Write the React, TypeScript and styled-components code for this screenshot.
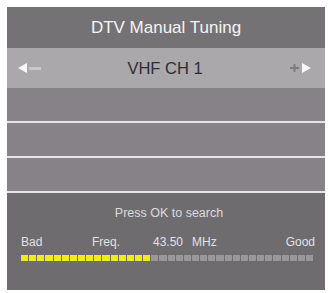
import styled, { createGlobalStyle } from "styled-components";

const Global = createGlobalStyle`
  body {
    margin: 0;
    background: #ffffff;
    font-family: "Liberation Sans", Arial, sans-serif;
  }
`;

const Page = styled.div`
  padding: 7px 3px 3px 7px;
`;

const Panel = styled.div`
  width: 318px;
  height: 283px;
  display: flex;
  flex-direction: column;
  background: #6f6c70;
`;

const TitleBar = styled.div`
  height: 41px;
  display: flex;
  align-items: center;
  justify-content: center;
  background: #757275;
  color: #f4f4f4;
  font-size: 17px;
  padding-top: 1px;
  box-sizing: border-box;
`;

const ChannelRow = styled.div`
  height: 40px;
  display: flex;
  align-items: center;
  justify-content: space-between;
  padding: 0 12px 0 10px;
  background: #aaa8ab;
  color: #2e2d30;
  font-size: 16.5px;
`;

const ArrowGroup = styled.div<{ $right?: boolean }>`
  width: 40px;
  display: flex;
  align-items: center;
  justify-content: ${({ $right }) => ($right ? "flex-end" : "flex-start")};
`;

const EmptyRow = styled.div`
  height: 33px;
  background: #868287;
  border-bottom: 2px solid #e6e4e8;
`;

const SearchPanel = styled.div`
  flex: 1;
  display: flex;
  flex-direction: column;
  padding: 13px 10px 0 14px;
  color: #dcdadd;
`;

const Hint = styled.div`
  text-align: center;
  font-size: 12.5px;
  padding-left: 2px;
`;

const Labels = styled.div`
  margin-top: 15px;
  display: flex;
  align-items: center;
  color: #e2e0e3;
  font-size: 12px;
`;

const Label = styled.span<{ $w?: number; $end?: boolean }>`
  width: ${({ $w }) => ($w ? `${$w}px` : "auto")};
  margin-left: ${({ $end }) => ($end ? "auto" : "0")};
`;

const Meter = styled.div`
  margin: 6px 2px 0 0;
  display: flex;
  gap: 1px;
`;

const Segment = styled.div<{ $on: boolean }>`
  flex: 1;
  height: 6px;
  background: ${({ $on }) => ($on ? "#f0ea1c" : "#9a979b")};
`;

function LeftArrow() {
  return (
    <svg width="26" height="12" viewBox="0 0 26 12">
      <polygon points="1,6 10,1 10,11" fill="#f8f8f8" />
      <rect x="12" y="5" width="12" height="3" fill="#c9c7ca" />
    </svg>
  );
}

function RightArrow() {
  return (
    <svg width="24" height="12" viewBox="0 0 24 12">
      <rect x="1" y="5" width="9" height="2" fill="#7e7c80" />
      <rect x="4.5" y="2" width="2" height="8" fill="#7e7c80" />
      <polygon points="22,6 13,1 13,11" fill="#f8f8f8" />
    </svg>
  );
}

export default function App() {
  const total = 36;
  const lit = 16;
  return (
    <Page>
      <Global />
      <Panel>
        <TitleBar>DTV Manual Tuning</TitleBar>
        <ChannelRow>
          <ArrowGroup>
            <LeftArrow />
          </ArrowGroup>
          <span>VHF CH 1</span>
          <ArrowGroup $right>
            <RightArrow />
          </ArrowGroup>
        </ChannelRow>
        <EmptyRow />
        <EmptyRow />
        <EmptyRow />
        <SearchPanel>
          <Hint>Press OK to search</Hint>
          <Labels>
            <Label $w={71}>Bad</Label>
            <Label $w={61}>Freq.</Label>
            <Label $w={39}>43.50</Label>
            <Label>MHz</Label>
            <Label $end>Good</Label>
          </Labels>
          <Meter>
            {Array.from({ length: total }, (_, i) => (
              <Segment key={i} $on={i < lit} />
            ))}
          </Meter>
        </SearchPanel>
      </Panel>
    </Page>
  );
}
